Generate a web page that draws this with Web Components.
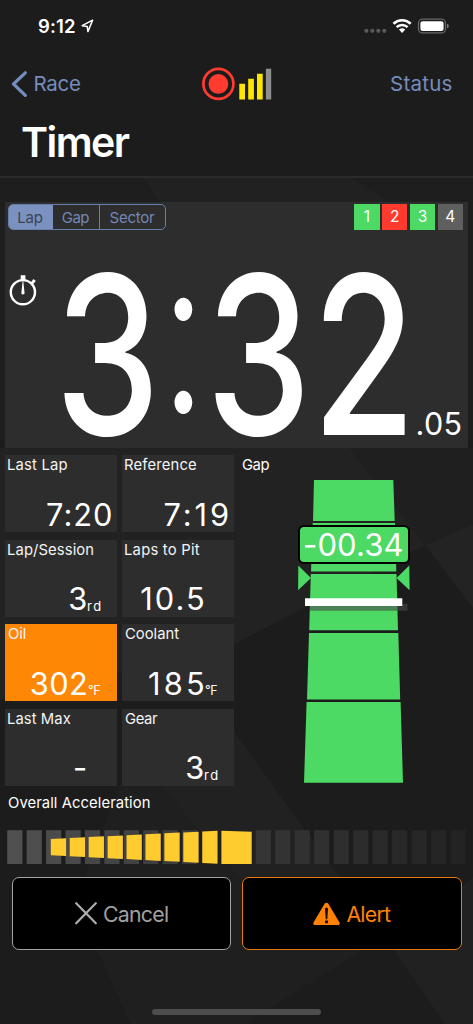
<!DOCTYPE html>
<html lang="en">
<head>
<meta charset="utf-8">
<title>Timer</title>
<style>
html,body{margin:0;padding:0;background:#1c1c1c}
body{width:473px;height:1024px;overflow:hidden;font-family:Inter,"Liberation Sans",sans-serif;color:#fff}
</style>
</head>
<body>
<timer-app></timer-app>
<script>
const define=(name,html,after)=>customElements.define(name,class extends HTMLElement{
  connectedCallback(){
    if(this.shadowRoot)return;
    this.attachShadow({mode:'open'}).innerHTML=html;
    if(after)after(this,this.shadowRoot);
  }
});
const ctx=document.createElement('canvas').getContext('2d');
const ink=(text,size,weight)=>{
  ctx.font=`${weight} ${size}px Inter, "Liberation Sans", sans-serif`;
  const m=ctx.measureText(text);
  return {left:-m.actualBoundingBoxLeft,width:m.actualBoundingBoxRight+m.actualBoundingBoxLeft};
};

/* A single line of text whose visible ink is tracked to fill the given width. */
define('track-text',`<style>
:host{display:block;flex:none;white-space:nowrap}
span{display:block}
</style><span></span>`,(el,root)=>{
  const size=+el.getAttribute('size'),weight=el.getAttribute('weight')||400,w=+el.getAttribute('w');
  const text=el.getAttribute('text'),span=root.querySelector('span');
  span.textContent=text;
  const m=ink(text,size,weight);
  el.style.width=w+'px';
  span.style.font=`${weight} ${size}px/${el.getAttribute('lh')||Math.round(size*1.3)}px Inter,"Liberation Sans",sans-serif`;
  span.style.marginLeft=-m.left+'px';
  if(text.length>1)span.style.letterSpacing=((w-m.width)/(text.length-1))+'px';
});

define('facet-backdrop',`<style>:host{position:absolute;inset:0;z-index:-1}svg{display:block}</style>
<svg width="473" height="1024" viewBox="0 0 473 1024">
<rect width="473" height="1024" fill="#1c1c1c"/>
<path d="M0 178H473V440H0Z" fill="#1e1e1e"/>
<path d="M145 178H350L395 205H160Z" fill="#212121"/>
<path d="M0 448H350L425 545L233 645L0 700Z" fill="#222"/>
<path d="M425 545L473 524V608Z" fill="#232323"/>
<path d="M350 448H473V524L425 545Z" fill="#1f1f1f"/>
<path d="M233 730L340 878L393 949H365L245 1024H130L75 900L120 785Z" fill="#1f1f1f"/>
<path d="M233 730L340 878H240L160 785Z" fill="#212121"/>
<path d="M393 949L473 877V1024H445Z" fill="#212121"/>
</svg>`);

define('status-bar',`<style>
:host{display:flex;height:51px;align-items:center;padding:0 23px 0 38px}
.loc{margin-left:6px}.right{margin-left:auto}
svg{display:block}
</style>
<track-text text="9:12" size="18.5" weight="600" w="37"></track-text>
<svg class="loc" width="13" height="14" viewBox="0 0 13 14"><path d="M11.6 1.2L1.2 6.7L6.2 7.4L6.9 12.6Z" fill="none" stroke="#fff" stroke-width="1.5" stroke-linejoin="round"/></svg>
<svg class="right" width="86" height="16" viewBox="364 17.5 86 16">
<g fill="#595959"><circle cx="366.4" cy="30.3" r="2.1"/><circle cx="372.3" cy="30.3" r="2.1"/><circle cx="378.3" cy="30.3" r="2.1"/><circle cx="384.3" cy="30.3" r="2.1"/></g>
<g fill="none" stroke="#fff" stroke-width="2.7"><path d="M393.5 23.2A12.4 12.4 0 0 1 410.7 23.2"/><path d="M396.6 26.7A8 8 0 0 1 407.6 26.7" stroke-width="2.5"/></g>
<path d="M399 29.1A4.5 4.5 0 0 1 405.2 29.1L402.1 32.5Z" fill="#fff"/>
<rect x="418.5" y="18.7" width="27" height="13.7" rx="4" fill="none" stroke="#696969" stroke-width="1.3"/>
<rect x="420.4" y="20.7" width="23.2" height="9.7" rx="2.2" fill="#fff"/>
<path d="M447 23.3Q448.8 23.8 448.8 25.6T447 27.9Z" fill="#777"/>
</svg>`);

define('nav-bar',`<style>
:host{display:block;height:125px;border-bottom:2px solid #2b2b2b;color:#768cbc}
.row{display:flex;align-items:center;height:65px;padding:0 21.5px 0 11px}
.back{display:flex;align-items:center;gap:7.5px;width:190px}
.end{margin-left:auto}
svg{display:block}
.title{padding:8px 0 0 22px;color:#fff}
</style>
<div class="row"><div class="back">
<svg width="16" height="28" viewBox="0 0 16 28"><path d="M14.3 2.8L2.5 14L14.3 25.3" fill="none" stroke="#768cbc" stroke-width="3.2" stroke-linecap="round" stroke-linejoin="round"/></svg>
<track-text text="Race" size="20.5" w="45.5"></track-text></div>
<svg width="72" height="36" viewBox="201 65.5 72 36">
<circle cx="218.4" cy="83.4" r="15" fill="none" stroke="#ff3b30" stroke-width="2.7"/><circle cx="218.4" cy="83.4" r="9.9" fill="#ff3b30"/>
<path d="M239.3 83.3h5.7V99h-5.7zM248.2 78.3h5.7V99h-5.7zM257 73.2h5.7V99H257z" fill="#ffe600"/><path d="M265.9 68.2h5.3V99h-5.3z" fill="#8e8e8e"/></svg>
<track-text class="end" text="Status" size="20.5" w="60.5"></track-text></div>
<div class="title"><track-text text="Timer" size="41" weight="600" w="107.7" lh="36"></track-text></div>`);

define('segment-control',`<style>
:host{display:flex;box-sizing:border-box;width:158.5px;height:26px;border:1.5px solid #687da9;border-radius:5px;overflow:hidden;color:#7388b7}
div{display:flex;align-items:center;justify-content:center}
.on{width:44px;background:#7b91bf;color:#3a4353}.b{width:46px}.c{flex:1;border-left:1.5px solid #687da9}
</style><div class="on"><track-text text="Lap" size="15" w="24.5" lh="21"></track-text></div><div class="b"><track-text text="Gap" size="15" w="27.5" lh="21"></track-text></div><div class="c"><track-text text="Sector" size="15" w="45.5" lh="21"></track-text></div>`);

define('sector-chip',`<style>
:host{display:flex;align-items:center;justify-content:center;width:25.4px;height:25.5px;background:#5f5f5f;font-size:15.5px;line-height:21px}
:host([state=good]){background:#4cd964}:host([state=bad]){background:#ff3b30}
</style><slot></slot>`);

/* Condensed lap time; the colon is lighter and raised to the middle of the figures. */
define('lap-digits',`<style>:host{display:block;flex:none}svg{display:block;overflow:visible}</style>
<svg width="360" height="180" viewBox="58 265 360 180"><text font-family="Inter,'Liberation Sans',sans-serif" font-size="221.5" fill="#fff"></text></svg>`,(el,root)=>{
  const t=root.querySelector('text'),size=221.5,m=ink('3',size,450),s=87/m.width;
  const lefts=[64,null,215,323.5];
  t.setAttribute('transform',`scale(${s} 1)`);
  t.innerHTML=[...'3:32'].map((c,i)=>{
    const w=c===':'?300:450,g=ink(c,size,w);
    const x=(c===':'?183.2/s-g.width/2:lefts[i]/s)-g.left;
    return `<tspan x="${x}" y="${c===':'?413.5:435.4}" font-weight="${w}">${c}</tspan>`;
  }).join('');
});

define('lap-panel',`<style>
:host{display:block;box-sizing:border-box;height:246px;margin:24.2px 5px 0;background:#2d2d2d;padding:2px 5px 0 2.5px}
.top{display:flex;justify-content:space-between}
.chips{display:flex;gap:2.4px}
.main{display:flex;margin-top:35px}
.watch{margin-top:9px}
lap-digits{margin-left:19.5px}
.main track-text{margin:138.5px 0 0 -.5px}
svg{display:block}
</style>
<div class="top"><segment-control></segment-control><div class="chips"><sector-chip state="good">1</sector-chip><sector-chip state="bad">2</sector-chip><sector-chip state="good">3</sector-chip><sector-chip>4</sector-chip></div></div>
<div class="main"><svg class="watch" width="31" height="34" viewBox="7.5 274 31 34">
<circle cx="22.4" cy="292.2" r="12.1" fill="none" stroke="#fff" stroke-width="2.4"/>
<path d="M20.2 275.2h4.7v5h-4.7zM30.5 282.2L33 279L35.3 281L32.5 284.2Z" fill="#fff"/>
<path d="M22.1 281.3h.7L24 292.6A1.6 1.6 0 1 1 20.9 292.6Z" fill="#fff"/></svg>
<lap-digits></lap-digits><track-text text=".05" size="30.5" w="43" lh="40"></track-text></div>`);

define('data-tile',`<style>
:host{display:flex;flex-direction:column;box-sizing:border-box;width:112px;height:76.7px;background:#2d2d2d;padding-left:3px;color:#f4f4f4}
:host([alert]){background:#ff8706}
.label{height:20px}
.value{display:flex;justify-content:flex-end;margin-top:19.5px;padding-right:6px;color:#fff}
.unit{display:flex;box-sizing:border-box;width:25px;padding:11.7px 0 0 2px}
</style><div class="label"></div><div class="value"></div>`,(el,root)=>{
  const a=n=>el.getAttribute(n);
  root.querySelector('.label').innerHTML=`<track-text text="${a('label')}" size="14.8" w="${a('lw')}" lh="20"></track-text>`;
  const unit=a('unit');
  root.querySelector('.value').innerHTML=`<track-text text="${a('value')}" size="30.8" w="${a('vw')}" lh="40"></track-text>`+
    (unit===null?'':`<div class="unit">${unit?`<track-text text="${unit}" size="${unit==='rd'?13:12.4}" w="12.3" lh="30"></track-text>`:''}</div>`);
});

define('gap-gauge',`<style>
:host{display:block;position:relative;width:231px}
.label{padding:0 0 0 3px}
svg{position:absolute;left:0;top:0}
.callout{position:absolute;left:58.5px;top:69.6px;box-sizing:border-box;width:112.5px;height:39.4px;border:2.6px solid #000;border-radius:6px;background:#4cd964;display:flex;align-items:center;justify-content:center}
</style>
<div class="label"><track-text text="Gap" size="14.8" w="27.5" lh="20"></track-text></div>
<svg width="231" height="335" viewBox="239 455.3 231 335">
<g fill="#4cd964"><path d="M314 480.4H393.3L394.7 521.2H313ZM312.7 523.3H395L396.3 571.7H311ZM310.8 574.3H396.5L398 630.6H309.2ZM309 633.2H398.3L400.2 699.8H307ZM306.6 702.3H400.6L403 783H304Z"/>
<path d="M298.3 565.8L311 578.4L298.1 590.6ZM409.3 565.8L396.5 578.4L409.6 590.6Z"/></g>
<path d="M310 604H407.4V611H310Z" fill="#484848" fill-opacity=".6"/><path d="M305 598.6H402.3V606.3H305Z" fill="#fff"/>
</svg>
<div class="callout"><track-text text="-00.34" size="31" w="97.5"></track-text></div>`);

define('data-board',`<style>
:host{display:flex;gap:5px;margin:7.2px 0 0 5px;height:330.3px}
.tiles{display:grid;grid-template-columns:112px 112px;column-gap:5px;row-gap:7.8px;align-content:start}
</style><div class="tiles">
<data-tile label="Last Lap" lw="59.5" value="7:20" vw="64"></data-tile>
<data-tile label="Reference" lw="71" value="7:19" vw="63.5"></data-tile>
<data-tile label="Lap/Session" lw="85.3" value="3" vw="16.7" unit="rd"></data-tile>
<data-tile label="Laps to Pit" lw="74.8" value="10.5" vw="61.8" unit=""></data-tile>
<data-tile alert label="Oil" lw="17.7" value="302" vw="55.3" unit="°F"></data-tile>
<data-tile label="Coolant" lw="54.3" value="185" vw="54" unit="°F"></data-tile>
<data-tile label="Last Max" lw="62.7" value="-" vw="11" unit=""></data-tile>
<data-tile label="Gear" lw="33" value="3" vw="16.7" unit="rd"></data-tile>
</div><gap-gauge></gap-gauge>`);

define('acceleration-meter',`<style>
:host{display:block;margin-top:7.5px;padding-left:8px}
svg{display:block;margin:17px 0 0 -8px}
</style><track-text text="Overall Acceleration" size="14.8" w="141.7" lh="20"></track-text>
<svg width="473" height="35" viewBox="0 830 473 35"></svg>`,(el,root)=>{
  let s='';
  const bar=(x,v)=>s+=`<rect x="${x}" y="830.2" width="15.2" height="33.8" fill="rgb(${v},${v},${v})"/>`;
  for(let i=0;i<10;i++)bar(7.2+i*19.43,80-i*2.4);
  for(let i=0;i<11;i++)bar(255.7+i*19.48,53-i*1.8);
  const top=x=>839-(x-50.8)*8.3/166.5,bot=x=>855.2+(x-50.8)*8.6/166.5;
  s+='<g fill="#ffcc2f">';
  for(let i=0;i<9;i++){const x=50.8+i*18.93,e=x+15.3;s+=`<path d="M${x} ${top(x)}L${e} ${top(e)}V${bot(e)}L${x} ${bot(x)}Z"/>`;}
  s+='<path d="M221.4 830.8L251.7 831.8V863.9H221.4Z"/></g>';
  root.querySelector('svg').innerHTML=s;
});

define('action-button',`<style>
:host{display:flex;box-sizing:border-box;width:219.3px;height:72.5px;border:1.4px solid #a3a3a3;border-radius:7px;background:#000;align-items:center;justify-content:center;gap:6.5px;color:#a0a0a0}
:host([kind=alert]){border-color:#e57a0d;color:#ff8206}
::slotted(svg){display:block}
</style><slot></slot>`);

define('action-row',`<style>:host{display:flex;gap:11px;margin:12.2px 0 0 12px}</style>
<action-button><svg width="22" height="23" viewBox="0 0 22 23"><path d="M1.2 1.2L20.8 21.3M20.8 1.2L1.2 21.3" stroke="#adadad" stroke-width="2.2" stroke-linecap="round"/></svg><track-text text="Cancel" size="21.3" w="64" lh="28"></track-text></action-button>
<action-button kind="alert"><svg width="27" height="24" viewBox="0 0 27 24"><path d="M11.8 1.6Q13.5-.2 15.2 1.6L26.5 20.6Q27.2 22.8 25.3 23H1.7Q-.2 22.8.5 20.6Z" fill="#ff8206"/><path d="M12 6.5Q13.5 4.7 15 6.5L14.3 17.2H12.7ZM12.1 18.6H14.9V21.2H12.1Z" fill="#150b00"/></svg><track-text text="Alert" size="21.3" w="44.6" lh="28"></track-text></action-button>`);

define('home-indicator',`<style>:host{display:block;width:169px;height:6px;border-radius:3px;background:#4d4d4d;margin:59.2px 0 0 152px}</style>`);

define('timer-app',`<style>:host{display:block;position:relative;z-index:0;width:473px;height:1024px;overflow:hidden}
</style><facet-backdrop></facet-backdrop><status-bar></status-bar><nav-bar></nav-bar><lap-panel></lap-panel><data-board></data-board><acceleration-meter></acceleration-meter><action-row></action-row><home-indicator></home-indicator>`);
</script>
</body>
</html>
